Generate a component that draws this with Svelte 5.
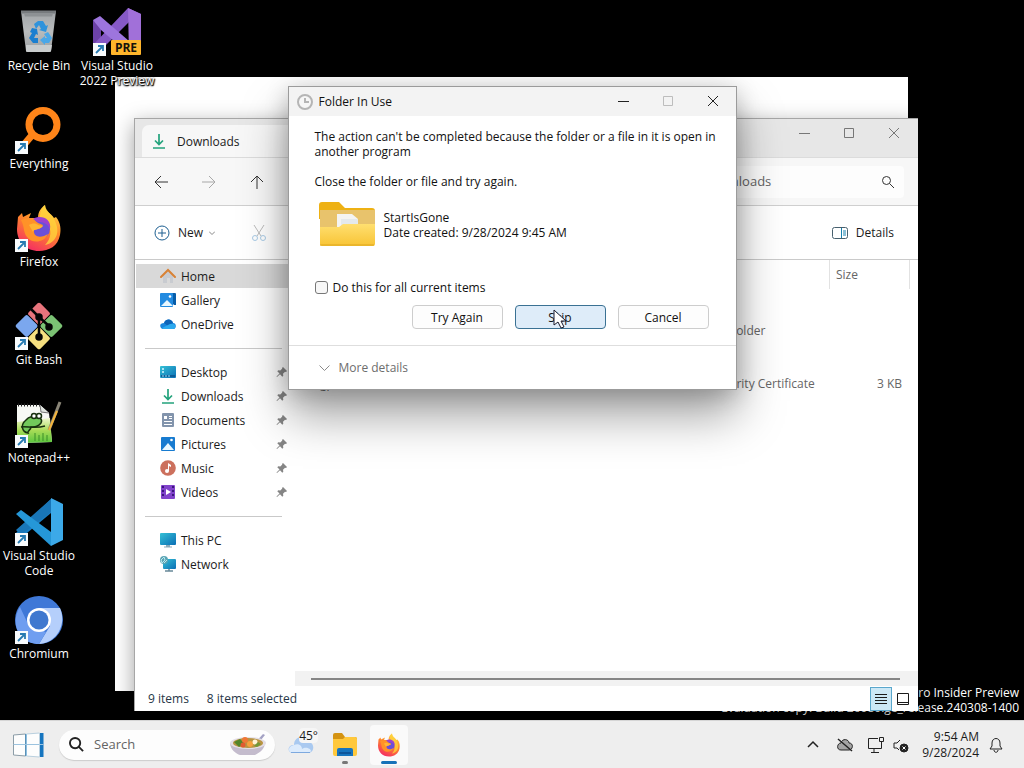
<script lang="ts">
	type Entry = { name: string; icon: string };

	const shortcuts: Entry[] = [
		{ name: 'Recycle Bin', icon: 'bin' },
		{ name: 'Everything', icon: 'everything' },
		{ name: 'Firefox', icon: 'firefox' },
		{ name: 'Git Bash', icon: 'git' },
		{ name: 'Notepad++', icon: 'notepad' },
		{ name: 'Visual Studio Code', icon: 'vscode' },
		{ name: 'Chromium', icon: 'chromium' },
		{ name: 'Visual Studio 2022 Preview', icon: 'vs' }
	];

	const home: Entry[] = [
		{ name: 'Home', icon: 'home' },
		{ name: 'Gallery', icon: 'gallery' },
		{ name: 'OneDrive', icon: 'onedrive' }
	];

	const pinned: Entry[] = [
		{ name: 'Desktop', icon: 'desktop' },
		{ name: 'Downloads', icon: 'downloads' },
		{ name: 'Documents', icon: 'documents' },
		{ name: 'Pictures', icon: 'pictures' },
		{ name: 'Music', icon: 'music' },
		{ name: 'Videos', icon: 'videos' }
	];

	const devices: Entry[] = [
		{ name: 'This PC', icon: 'pc' },
		{ name: 'Network', icon: 'network' }
	];

	let current = $state('Home');
	let applyAll = $state(false);
	let query = $state('');
	let search = $state('');
</script>

{#snippet appIcon(name: string)}
	<svg class="app-icon" viewBox="0 0 48 48" aria-hidden="true">
		{#if name === 'bin'}
			<path d="M6 3h35l-5 40q0 1-2 1H13q-2 0-2-1z" fill="url(#bin)" />
			<path d="M6 2.500h35v3H6z" fill="#777b7e" />
			<path d="M9 5.500h29l-1 3H10z" fill="#8d9194" />
			<path d="M11 37h26l-1 6q0 1-2 1H13q-2 0-2-1z" fill="#c9cccd" />
			<g fill="#2f93dc">
				<path d="M19 16l4-3h5l3 5 2-1-2 7-7-2 2-1-2-4-3 4z" />
				<path d="M17 20l5 1 1 6-2-1-2 4h4v5h-5l-4-5 3-5-2-1z" fill="#1b7fd0" />
				<path d="M33 24l4 6-3 5h-4v2l-5-5 5-4v2h2l-3-4z" fill="#4aa7e8" />
			</g>
		{:else if name === 'everything'}
			<path d="M18 28L7 41" stroke="#ff8519" stroke-width="7" />
			<circle cx="28" cy="18.500" r="14" fill="none" stroke="#ff8519" stroke-width="7" />
		{:else if name === 'git'}
			<g transform="rotate(45 24 24)">
				<rect x="7" y="7" width="16.500" height="16.500" rx="2" fill="#e8747c" />
				<rect x="24.500" y="7" width="16.500" height="16.500" rx="2" fill="#7bc274" />
				<rect x="7" y="24.500" width="16.500" height="16.500" rx="2" fill="#7ba7ee" />
				<rect x="24.500" y="24.500" width="16.500" height="16.500" rx="2" fill="#f6e080" />
			</g>
			<g stroke="#050505" stroke-width="2.500" fill="#050505">
				<path d="M15 6l9 9v20M24 15l10 9" fill="none" />
				<circle cx="24" cy="15" r="2.500" />
				<circle cx="34" cy="25" r="2.500" />
				<circle cx="24" cy="35" r="2.500" />
			</g>
		{:else if name === 'notepad'}
			<path d="M2 5h23l9 8 3 29-31 1-4-2z" fill="#f7f9f5" />
			<path d="M2 22l33-4 2 24-31 1-4-2z" fill="url(#note)" />
			<path d="M3 5h22" stroke="#222" stroke-width="3" stroke-dasharray="1 2" />
			<path d="M25 5l1 7 8 1" fill="#dfe4df" stroke="#777" />
			<g fill="#72c95b" stroke="#18310f" stroke-width="1.500">
				<path d="M13 33c-6-1-8-8-2-13 3-4 8-4 9-2 4-2 8 1 6 5-4 5-7 4-10 4 0 3-4 4-3 6z" />
				<circle cx="19" cy="16" r="2.500" fill="#fff" />
				<circle cx="24" cy="16" r="2.500" fill="#fff" />
				<path d="M6 27c6-1 14 2 24-1" fill="none" />
			</g>
			<path d="M20 41v-8m4 8v-6m4 6v-8m4 8v-6" stroke="#3b8d29" />
			<path d="M45 2L34 30" stroke="#8a8577" stroke-width="3" />
			<path d="M42 11L34 30" stroke="#f3b43b" stroke-width="2" />
		{:else if name === 'vscode'}
			<path d="M36 1v14L6 40l-5-5z" fill="#1a7fc4" />
			<path d="M36 1L1 32l5 5 30-23z" fill="#1976b8" />
			<path d="M6 12L1 16l35 32V34z" fill="#2597d8" />
			<path d="M36 0l12 6v36l-12 6z" fill="#3ca9e8" />
		{:else if name === 'chromium'}
			<circle cx="24" cy="24" r="24" fill="#3f78d7" />
			<path d="M24 12h21c7 16-3 35-21 36l11-18z" fill="#b5cffb" />
			<path d="M5 11l9 19 17 6-7 12C5 48-6 28 5 11z" fill="#6f9ef0" />
			<circle cx="24" cy="24" r="12" fill="#fff" />
			<circle cx="24" cy="24" r="9.500" fill="#3f78cf" />
		{:else if name === 'vs'}
			<path d="M0 12l8 4v18l-8 5z" fill="#6d42a8" />
			<path d="M0 37L35 0l13 6v35l-12 5V14L8 42z" fill="#8659c6" />
			<path d="M35 0l13 6v35l-12 5z" fill="#a170d9" />
			<path d="M0 12l7-4 29 25v13L8 22z" fill="#9d75dd" />
			<rect x="18" y="32" width="30" height="15" rx="1" fill="#ffb52b" />
			<text x="33" y="44" text-anchor="middle" class="pre">PRE</text>
		{:else}
			<path
				d="M3 13l4-4 1 4 8-4-2 5h9c0-7 4-11 7-13 0 7 6 8 9 13l2-1c5 6 5 13 4 18C43 42 34 47 24 47 11 47 2 38 2 25z"
				fill="url(#fox)"
			/>
			<path d="M25 14c0-7 2-10 5-13 1 7 7 9 10 16 7 15-3 23-10 24 6-6 8-16 1-22z" fill="#ffd33c" opacity=".8" />
			<circle cx="25" cy="25" r="10" fill="#6a50d7" />
			<path d="M18 15c8-5 19 0 17 10-3-7-9-7-12-7z" fill="#9c41cf" />
			<path d="M6 16c7-3 13-1 17 3l5 2c-1 4-6 4-9 5-1 8 8 8 14 4-4 9-16 10-21 3-4-5-2-9-6-17z" fill="#ff9228" />
			<path d="M14 21c3-2 7-2 9 0l5 1c-3 4-10 3-10 6z" fill="#ffb534" />
		{/if}
		{#if name !== 'bin' && name !== 'task'}
			<rect x="0" y="35" width="13" height="13" fill="#f8fbfd" />
			<path d="M3 45l6-6M5 38h5v5" fill="none" stroke="#287bb2" stroke-width="1.800" />
		{/if}
	</svg>
{/snippet}

{#snippet navIcon(name: string)}
	<svg class="nav-icon" viewBox="0 0 16 16" aria-hidden="true">
		{#if name === 'home'}
			<path d="M3 7l5-4 5 4v8h-3v-5H7v5H3z" fill="#c8cbd0" />
			<path d="M1 9l7-7 7 7" fill="none" stroke="#d88235" stroke-width="2" stroke-linecap="round" />
		{:else if name === 'gallery'}
			<path d="M3 1h12q1 0 1 1v11h-2z" fill="#075da9" />
			<rect y="1" width="13" height="14" rx="1" fill="#238be0" />
			<path d="M1 14l6-6 6 6z" fill="#e9f8ff" />
			<circle cx="10" cy="4.500" r="1.300" fill="#fff" />
		{:else if name === 'onedrive'}
			<path d="M1 12c-2-3 0-5 3-5 2-5 8-4 9 0 3 0 4 4 1 6H3q-1 0-2-1z" fill="#1785dc" />
			<path d="M4 7c2-5 8-4 9 0l-5 3z" fill="#0b63b8" />
			<path d="M2 12l8-4q3-1 5 1c1 2 0 4-2 4H3z" fill="#2ba9ee" />
		{:else if name === 'desktop'}
			<rect y="2" width="16" height="12" rx="1" fill="url(#screen)" />
			<path d="M2 5h2m-2 3h2" stroke="#d8f6ff" stroke-width="1.500" />
			<path d="M1 12h14" stroke="#0c5c96" stroke-width="2" />
			<path d="M2 12h2m1 0h2m1 0h2" stroke="#9fe3f5" />
		{:else if name === 'downloads'}
			<path d="M8 1v10M4 7.500L8 11.500l4-4M2 15h12" fill="none" stroke="#23a37c" stroke-width="1.700" />
		{:else if name === 'documents'}
			<rect x="2" y="1" width="12" height="14" rx="1" fill="#8294ac" />
			<path d="M4 4h3v3H4zM9 4h3v1H9zm0 2h3v1H9zM4 9h8v1H4zm0 3h8v1H4z" fill="#fff" />
		{:else if name === 'pictures'}
			<rect x="1" y="1" width="14" height="14" rx="1" fill="#177bd0" />
			<path d="M2 14l6-7 6 7z" fill="#e9f8ff" />
			<circle cx="11.500" cy="4" r="1.300" fill="#fff" />
		{:else if name === 'music'}
			<circle cx="8" cy="8" r="7.800" fill="#cc705d" />
			<path d="M8 11V3l3 2v2L9 6v5" fill="#fff" />
			<circle cx="7" cy="11" r="2" fill="#fff" />
		{:else if name === 'videos'}
			<rect x="1" y="1" width="14" height="14" rx="1" fill="#8143cb" />
			<path d="M3 2v12M13 2v12" stroke="#3b177d" stroke-width="2" stroke-dasharray="2 2" />
			<path d="M6 5l5 3-5 3z" fill="#fff" />
		{:else if name === 'pc'}
			<rect y="1" width="16" height="12" rx="1" fill="url(#screen)" />
			<path d="M6 13h4v2H6z" fill="#8ba9b9" />
			<path d="M4 15h8" stroke="#8ba9b9" />
		{:else}
			<rect x="3" y="3" width="13" height="10" rx="1" fill="url(#screen)" />
			<path d="M9 13v2M5 15h8" stroke="#688999" stroke-width="1.500" />
			<circle cx="4" cy="4" r="4" fill="#5ba4b5" />
			<path d="M1 4l3-3 1 3-3 3zm3 3l3-3" stroke="#b9e8ed" fill="none" />
		{/if}
	</svg>
{/snippet}

{#snippet navItem(item: Entry, pin: boolean)}
	<a
		class="nav-item"
		class:active={current === item.name}
		href="#{item.icon}"
		onclick={() => (current = item.name)}
	>
		{@render navIcon(item.icon)}
		<span>{item.name}</span>
		{#if pin}
			<svg class="pin" viewBox="0 0 12 12" aria-hidden="true">
				<path d="M7 1l4 4-1 1-1-.300-2 2 .300 2-1 1-2.300-2.400L1 11l-.500-.500L3.500 7.500 1.300 5.200l1-1 2 .300 2-2L6 2z" />
			</svg>
		{/if}
	</a>
{/snippet}

<svg class="defs" aria-hidden="true">
	<defs>
		<linearGradient id="bin" x2="0" y2="1">
			<stop stop-color="#a0a4a7" />
			<stop offset=".500" stop-color="#b9bcbd" />
			<stop offset="1" stop-color="#9da0a2" />
		</linearGradient>
		<linearGradient id="note" x2="0" y2="1">
			<stop stop-color="#f0f8cf" />
			<stop offset=".500" stop-color="#a8dc57" />
			<stop offset="1" stop-color="#5ac53f" />
		</linearGradient>
		<linearGradient id="fox" x1=".800" y1="0" x2=".300" y2="1">
			<stop stop-color="#ffe14a" />
			<stop offset=".450" stop-color="#ff8a29" />
			<stop offset="1" stop-color="#f42c63" />
		</linearGradient>
		<linearGradient id="screen" x2="1" y2="1">
			<stop stop-color="#35c1d6" />
			<stop offset="1" stop-color="#0b6fb5" />
		</linearGradient>
		<linearGradient id="folder" x2="0" y2="1">
			<stop stop-color="#ffdf70" />
			<stop offset="1" stop-color="#f8c435" />
		</linearGradient>
	</defs>
</svg>

<div class="screen">
	<main class="desktop">
		<div class="blank-window"></div>

		<div class="shortcuts">
			{#each shortcuts as item}
				<button class="shortcut">
					{@render appIcon(item.icon)}
					<span>{item.name}</span>
				</button>
			{/each}
		</div>

		<div class="watermark">
			<div>Windows 11 Pro Insider Preview</div>
			<div>Evaluation copy. Build 26080.ge_release.240308-1400</div>
		</div>

		<section class="explorer" aria-label="Downloads">
			<header class="tabs">
				<div class="tab">
					{@render navIcon('downloads')}
					<span>Downloads</span>
				</div>
				<div class="controls">
					<button aria-label="Minimize window">
						<svg viewBox="0 0 12 12"><path d="M1 6.500h11" /></svg>
					</button>
					<button aria-label="Maximize window">
						<svg viewBox="0 0 12 12"><path d="M1.500 1.500h9v9h-9z" /></svg>
					</button>
					<button aria-label="Close window">
						<svg viewBox="0 0 12 12"><path d="M1 1l10 10M11 1L1 11" /></svg>
					</button>
				</div>
			</header>

			<div class="toolbar">
				<button aria-label="Back">
					<svg viewBox="0 0 14 14"><path d="M14 7H1M7 1L1 7l6 6" /></svg>
				</button>
				<button aria-label="Forward" disabled>
					<svg viewBox="0 0 14 14"><path d="M0 7h13M7 1l6 6-6 6" /></svg>
				</button>
				<button aria-label="Up">
					<svg viewBox="0 0 14 14"><path d="M7 14V1M1 7l6-6 6 6" /></svg>
				</button>
				<label class="find">
					<input type="text" aria-label="Search Downloads" placeholder="Search Downloads" bind:value={query} />
					<svg viewBox="0 0 12 12" aria-hidden="true"><circle cx="4.500" cy="4.500" r="4" /><path d="M7.500 7.500L12 12" /></svg>
				</label>
			</div>

			<div class="commands">
				<button class="new">
					<svg class="plus" viewBox="0 0 16 16" aria-hidden="true">
						<circle cx="8" cy="8" r="7" /><path d="M4 8h8M8 4v8" />
					</svg>
					<span>New</span>
					<svg class="caret" viewBox="0 0 6 4" aria-hidden="true"><path d="M0 .500l3 3 3-3" /></svg>
				</button>
				<button class="cut" aria-label="Cut" disabled>
					<svg viewBox="0 0 16 16">
						<path d="M3 0l7 11M13 0L6 11" stroke="#bbb" />
						<circle cx="4" cy="13" r="2.500" stroke="#a9cbe6" />
						<circle cx="12" cy="13" r="2.500" stroke="#a9cbe6" />
					</svg>
				</button>
				<button class="details">
					<svg viewBox="0 0 16 12" aria-hidden="true">
						<rect x=".500" y=".500" width="15" height="11" rx="2" fill="#fff" stroke="#47606e" />
						<path d="M9.500 1v10M11 4h3m-3 2h3m-3 2h3" stroke="#1681ae" />
					</svg>
					<span>Details</span>
				</button>
			</div>

			<div class="content">
				<nav>
					{#each home as item}{@render navItem(item, false)}{/each}
					<hr />
					{#each pinned as item}{@render navItem(item, true)}{/each}
					<hr />
					{#each devices as item}{@render navItem(item, false)}{/each}
				</nav>

				<div class="files">
					<table>
						<thead>
							<tr><th aria-label="Name"></th><th class="type">Type</th><th class="size">Size</th></tr>
						</thead>
						<tbody>
							<tr class="group"><td colspan="3"></td></tr>
							<tr><td></td><td>File folder</td><td></td></tr>
							<tr class="group"><td colspan="3"></td></tr>
							<tr><td>gp</td><td>Security Certificate</td><td class="kb">3 KB</td></tr>
						</tbody>
					</table>
					<div class="scrollbar"><div class="thumb"></div></div>
				</div>
			</div>

			<footer class="status">
				<span>9 items</span>
				<span>8 items selected</span>
				<button class="view on" aria-label="Details view">
					<svg viewBox="0 0 12 12"><path d="M0 1.500h12M0 4.500h12M0 7.500h12M0 10.500h12" /></svg>
				</button>
				<button class="view" aria-label="Large icons view">
					<svg viewBox="0 0 12 12"><path d="M.500.500h11v11H.500zM1 9.500h10" /></svg>
				</button>
			</footer>
		</section>

		<div class="dialog" role="dialog" aria-labelledby="dialog-title">
			<header>
				<svg class="clock" viewBox="0 0 16 16" aria-hidden="true">
					<circle cx="8" cy="8" r="7" /><path d="M8 4v4h4" />
				</svg>
				<span id="dialog-title">Folder In Use</span>
				<div class="controls">
					<button aria-label="Minimize">
						<svg viewBox="0 0 12 12"><path d="M1 6.500h11" /></svg>
					</button>
					<button aria-label="Maximize" disabled>
						<svg viewBox="0 0 12 12"><path d="M1.500 1.500h9v9h-9z" /></svg>
					</button>
					<button aria-label="Close">
						<svg viewBox="0 0 12 12"><path d="M1 1l10 10M11 1L1 11" /></svg>
					</button>
				</div>
			</header>

			<div class="message">
				<p>The action can't be completed because the folder or a file in it is open in another program</p>
				<p>Close the folder or file and try again.</p>
				<div class="item">
					<svg viewBox="0 0 56 45" aria-hidden="true">
						<path d="M0 3q0-3 3-3h17l6 6h27q3 0 3 3v8H0z" fill="#eeb114" />
						<path d="M1 8h55v24H1z" fill="#e8c36c" />
						<path d="M18 12h15l6 5v15H18z" fill="#f4f4f2" />
						<path d="M22 17h17v12H22z" fill="#e4e9ec" />
						<path d="M1 25h19l4-3h32v20q0 2-2 2H3q-2 0-2-2z" fill="url(#folder)" />
						<path d="M1 43h54" stroke="#dca721" />
					</svg>
					<div>
						<div>StartIsGone</div>
						<div>Date created: 9/28/2024 9:45 AM</div>
					</div>
				</div>
				<label class="check">
					<input type="checkbox" bind:checked={applyAll} />
					<span>Do this for all current items</span>
				</label>
				<div class="actions">
					<button>Try Again</button>
					<button class="hot">
						Skip
						<svg class="cursor" viewBox="0 0 14 20" aria-hidden="true">
							<path d="M1 1v15l4-3 3 6 3-1-3-6h5z" fill="#fff" stroke="#191b2c" />
						</svg>
					</button>
					<button>Cancel</button>
				</div>
			</div>

			<footer>
				<button class="more">
					<svg viewBox="0 0 11 6" aria-hidden="true"><path d="M.500.500l5 5 5-5" /></svg>
					More details
				</button>
			</footer>
		</div>
	</main>

	<footer class="taskbar">
		<button class="start" aria-label="Start">
			<svg viewBox="0 0 32 26" aria-hidden="true">
				<path d="M27 1h4v24h-4z" fill="#1675bf" />
				<path d="M1 3l12-1v10H1zM14 2l13-1v11H14zM1 13h12v11L1 23zM14 13h13v12l-13-1z" fill="#fdfdfd" />
				<path d="M1 3l12-1v22L1 23z" fill="none" stroke="#8c9da8" />
				<path d="M13.500 2v22" stroke="#2685c8" />
				<path d="M1 12.500h30" stroke="#9cc3df" />
				<path d="M14 2l13-1v24l-13-1" fill="none" stroke="#b9d0df" />
			</svg>
		</button>
		<label class="search">
			<svg class="lens" viewBox="0 0 16 16" aria-hidden="true"><circle cx="6.500" cy="6.500" r="5.500" /><path d="M10.500 10.500L15 15" /></svg>
			<input type="text" aria-label="Search" placeholder="Search" bind:value={search} />
			<svg class="bowl" viewBox="0 0 36 22" aria-hidden="true">
				<path d="M24 10l9-10 2 1-9 11z" fill="#a4a2c4" />
				<path d="M0 9c0 6 6 11 10 12h15c6-3 10-7 10-13z" fill="#c4bccd" />
				<ellipse cx="18" cy="9" rx="18" ry="6" fill="#e4dfe6" />
				<ellipse cx="18" cy="9" rx="15" ry="5" fill="#b99443" />
				<path d="M4 8l6-3 4 4-5 4z" fill="#54852a" />
				<circle cx="15" cy="6" r="3" fill="#ef7735" />
				<circle cx="20" cy="10" r="3" fill="#f6a03d" />
				<circle cx="13" cy="11" r="2.500" fill="#df5b30" />
				<circle cx="25" cy="8" r="2.500" fill="#fff2d6" />
				<path d="M24 12l4-4 3 2-4 3z" fill="#72983a" />
			</svg>
		</label>
		<button class="weather" aria-label="Weather">
			<svg viewBox="0 0 26 18" aria-hidden="true">
				<path d="M5 17C-1 17-1 9 6 9c0-9 11-11 14-3 7 0 7 11 0 11z" fill="#a9c9f0" />
				<path d="M6 9c5-2 8 1 8 4 4-3 9 0 9 2q-1 2-3 2H5c-6-1-5-7 1-8z" fill="#dcebfc" />
				<path d="M3 16.500h19" stroke="#7da9df" />
			</svg>
			<span>45°</span>
		</button>
		<button class="task" aria-label="File Explorer">
			<svg viewBox="0 0 24 24" aria-hidden="true">
				<path d="M0 2q0-2 2-2h7l3 4h10q2 0 2 2v5H0z" fill="#d49312" />
				<path d="M0 6h10l2-2h10q2 0 2 2v15q0 2-2 2H2q-2 0-2-2z" fill="#ffc83c" />
				<path d="M4 23v-6q0-2 2-2h12q2 0 2 2v6z" fill="#1674be" />
				<path d="M6 20h12" stroke="#0d559a" stroke-width="2" />
			</svg>
			<i></i>
		</button>
		<button class="task focused" aria-label="Firefox">
			{@render appIcon('task')}
			<i></i>
		</button>

		<div class="tray">
			<button class="overflow" aria-label="Show hidden icons">
				<svg viewBox="0 0 16 16"><path d="M3 10l5-5 5 5" stroke-width="1.500" /></svg>
			</button>
			<button aria-label="OneDrive status">
				<svg viewBox="0 0 16 16">
					<path d="M4 13c-5 0-4-7 0-7 1-5 8-4 8 0 5 0 4 7 0 7z" fill="#a4a4a4" />
					<path d="M1 2l14 12" stroke-width="1.500" />
				</svg>
			</button>
			<button class="network" aria-label="Network">
				<svg viewBox="0 0 16 16">
					<path d="M10 1.500H.500v10h13V7M6 12v3M3 15.500h8" />
					<path d="M11.500.500h4v4h-4zM13.500 5v3" />
				</svg>
			</button>
			<button aria-label="Volume muted">
				<svg viewBox="0 0 16 16">
					<path d="M7 3L4 6H1v5h3l2 2" />
					<circle cx="11" cy="11" r="4" fill="#222" />
					<path d="M9.500 9.500l3 3m0-3l-3 3" stroke="#fff" />
				</svg>
			</button>
			<div class="time">
				<div>9:54 AM</div>
				<div>9/28/2024</div>
			</div>
			<button aria-label="Notifications">
				<svg viewBox="0 0 16 16"><path d="M2 12l2-3V6c0-6 8-6 8 0v3l2 3zM6 13c0 3 4 3 4 0" /></svg>
			</button>
		</div>
	</footer>
</div>

<style>
	:global(body) {
		margin: 0;
		background: #000;
	}

	.screen {
		display: flex;
		flex-direction: column;
		height: 100vh;
		overflow: hidden;
		font-family: 'Open Sans', 'Noto Sans', sans-serif;
		font-size: 12px;
		line-height: 15px;
		color: #1b1b1b;
	}

	.defs {
		position: absolute;
		width: 0;
		height: 0;
	}

	button {
		display: flex;
		align-items: center;
		justify-content: center;
		padding: 0;
		border: 0;
		background: none;
		font: inherit;
		color: inherit;
	}

	input {
		min-width: 0;
		padding: 0;
		border: 0;
		outline: 0;
		background: none;
		font: inherit;
		color: inherit;
	}

	svg {
		flex: none;
	}

	.desktop {
		position: relative;
		flex: 1;
		min-height: 0;
		overflow: hidden;
		background: #000;
	}

	.blank-window {
		position: absolute;
		inset: 77px 116px 29px 115px;
		background: #fff;
	}

	.shortcuts {
		position: relative;
		display: grid;
		grid-template-rows: repeat(7, 98px);
		grid-auto-columns: 78px;
		grid-auto-flow: column;
		width: max-content;
	}

	.shortcut {
		flex-direction: column;
		justify-content: flex-start;
		gap: 2px;
		padding-top: 8px;
		color: #fff;
		text-shadow: 0 1px 2px #000, 0 0 2px #000, 1px 1px 1px #000;
	}

	.shortcut span {
		width: 78px;
	}

	.app-icon {
		width: 48px;
		height: 48px;
	}

	.pre {
		font: 700 12px 'Open Sans', sans-serif;
		fill: #15120b;
		text-shadow: none;
	}

	.watermark {
		position: absolute;
		right: 5px;
		bottom: 5px;
		color: #fff;
		text-align: right;
	}

	.explorer {
		position: absolute;
		inset: 118px 106px 9px 134px;
		display: flex;
		flex-direction: column;
		box-sizing: border-box;
		border: 1px solid #a6a6a6;
		border-width: 1px 0 0 1px;
		background: #fff;
		box-shadow: 0 6px 20px rgb(0 0 0 / 38%);
	}

	.tabs {
		display: flex;
		align-items: flex-end;
		justify-content: space-between;
		height: 38px;
		background: #e7e7e7;
	}

	.tab {
		display: flex;
		align-items: center;
		gap: 10px;
		width: 222px;
		height: 32px;
		margin-left: 7px;
		padding-left: 9px;
		border-radius: 7px 7px 0 0;
		background: #f7f7f7;
	}

	.nav-icon {
		width: 16px;
		height: 16px;
	}

	.controls {
		display: flex;
		align-self: flex-start;
	}

	.tabs .controls {
		padding-right: 2px;
	}

	.controls button {
		width: 45px;
		height: 28px;
	}

	.controls svg {
		width: 12px;
		height: 12px;
		fill: none;
		stroke: #777;
	}

	.toolbar {
		display: flex;
		align-items: center;
		height: 47px;
		border-top: 1px solid #dcdcdc;
		border-bottom: 1px solid #cfcfcf;
		padding: 0 14px 0 2px;
		background: #f7f7f7;
	}

	.toolbar button {
		width: 48px;
		height: 32px;
	}

	.toolbar svg {
		width: 14px;
		height: 14px;
		fill: none;
		stroke: #333;
	}

	.toolbar button:disabled {
		opacity: 0.4;
	}

	.find {
		display: flex;
		align-items: center;
		width: 255px;
		height: 32px;
		margin-left: auto;
		padding: 0 10px;
		box-sizing: border-box;
		border-radius: 4px;
		background: #fdfdfd;
		font-size: 13px;
	}

	.find input {
		flex: 1;
	}

	.find svg {
		width: 12px;
		height: 12px;
	}

	input::placeholder {
		color: #646464;
		opacity: 1;
	}

	.commands {
		display: flex;
		align-items: center;
		height: 53px;
		padding: 0 24px 0 19px;
		border-bottom: 1px solid #cacaca;
	}

	.new {
		gap: 8px;
	}

	.new svg,
	.cut svg {
		width: 16px;
		height: 16px;
		fill: none;
		stroke: #1d5f91;
	}

	.new .caret {
		width: 6px;
		height: 4px;
		margin-left: -2px;
		stroke: #888;
	}

	.cut {
		margin-left: 36px;
	}

	.details {
		gap: 8px;
		margin-left: auto;
	}

	.details svg {
		width: 16px;
		height: 12px;
	}

	.content {
		display: flex;
		flex: 1;
		min-height: 0;
	}

	nav {
		width: 160px;
		padding-top: 4px;
	}

	.nav-item {
		display: flex;
		align-items: center;
		gap: 5px;
		height: 24px;
		margin-left: 1px;
		padding: 0 7px 0 24px;
		color: inherit;
		text-decoration: none;
	}

	.nav-item.active {
		background: #d9d9d9;
	}

	.pin {
		width: 12px;
		height: 12px;
		margin-left: auto;
		fill: #858585;
	}

	hr {
		height: 1px;
		margin: 12px 13px 11px 10px;
		border: 0;
		background: #c9c9c9;
	}

	.files {
		display: flex;
		flex: 1;
		flex-direction: column;
		justify-content: space-between;
		min-width: 0;
	}

	table {
		width: 100%;
		padding-right: 8px;
		border-spacing: 0;
		table-layout: fixed;
		color: #666;
	}

	th {
		height: 29px;
		padding: 0 6px;
		box-sizing: border-box;
		border-right: 1px solid #e2e2e2;
		font-weight: 400;
		text-align: left;
	}

	.type {
		width: 126px;
	}

	.size {
		width: 80px;
	}

	th:first-child,
	td:first-child {
		padding-left: 25px;
	}

	td {
		height: 24px;
		padding: 0 6px;
	}

	.group td {
		height: 29px;
	}

	td.kb {
		text-align: right;
		padding-right: 8px;
	}

	.scrollbar {
		display: flex;
		align-items: center;
		height: 15px;
		padding: 0 18px 0 16px;
		background: #f2f2f2;
	}

	.thumb {
		flex: 1;
		height: 2px;
		background: #868686;
	}

	.status {
		display: flex;
		align-items: center;
		height: 25px;
		padding: 0 4px 0 13px;
		color: #263647;
	}

	.status span {
		margin-right: 18px;
	}

	.view {
		width: 22px;
		height: 24px;
		box-sizing: border-box;
	}

	.view.on {
		margin-left: auto;
		border: 1px solid #5aa7cc;
		background: #cce8f6;
	}

	.view svg {
		width: 12px;
		height: 12px;
		fill: none;
		stroke: #1b1b1b;
	}

	.dialog {
		position: absolute;
		top: 86px;
		right: 0;
		left: 0;
		width: 447px;
		margin: 0 auto;
		border: 1px solid #9b9b9b;
		background: #fff;
		color: #111;
		box-shadow: 0 26px 44px rgb(0 0 0 / 36%), 0 4px 22px rgb(0 0 0 / 20%);
	}

	.dialog header {
		display: flex;
		align-items: center;
		gap: 6px;
		height: 29px;
		padding-left: 8px;
		background: #f3f3f3;
	}

	.clock {
		width: 16px;
		height: 16px;
		fill: #f6f6f6;
		stroke: #b5b5b5;
		stroke-width: 2;
	}

	.dialog .controls {
		margin-left: auto;
	}

	.dialog .controls svg {
		stroke: #222;
	}

	.dialog .controls button:disabled svg {
		stroke: #bdbdbd;
	}

	.message {
		padding: 13px 8px 16px 26px;
	}

	p {
		margin: 0 0 15px;
	}

	.item {
		display: flex;
		align-items: center;
		gap: 9px;
		margin: -2px 0 33px 4px;
	}

	.item svg {
		width: 56px;
		height: 45px;
	}

	.check {
		display: flex;
		align-items: center;
		gap: 5px;
		height: 15px;
	}

	.check input {
		width: 13px;
		height: 13px;
		margin: 0;
		border: 1px solid #777;
		border-radius: 3px;
		background: #f7f7f7;
		appearance: none;
	}

	.check input:checked {
		background: #287bb2;
	}

	.actions {
		display: flex;
		justify-content: flex-end;
		gap: 12px;
		margin: 10px 19px 0 0;
	}

	.actions button {
		position: relative;
		width: 91px;
		height: 24px;
		border: 1px solid #cdcdcd;
		border-radius: 4px;
		background: #fdfdfd;
	}

	.actions .hot {
		border-color: #3a7193;
		background: #deecf9;
	}

	.cursor {
		position: absolute;
		top: 3px;
		left: 37px;
		width: 14px;
		height: 20px;
	}

	.dialog footer {
		padding-left: 30px;
		border-top: 1px solid #dedede;
	}

	.more {
		gap: 9px;
		height: 43px;
		color: #6d6d6d;
	}

	.more svg {
		width: 11px;
		height: 6px;
		fill: none;
		stroke: #8a8a8a;
	}

	.taskbar {
		display: flex;
		align-items: center;
		height: 48px;
		box-sizing: border-box;
		padding: 0 20px 0 12px;
		border-top: 1px solid #d5d5d5;
		background: #eee;
	}

	.start svg {
		width: 33px;
		height: 26px;
	}

	.search {
		display: flex;
		align-items: center;
		gap: 10px;
		width: 216px;
		height: 30px;
		margin-left: 14px;
		padding: 0 9px 0 10px;
		box-sizing: border-box;
		border-radius: 15px;
		background: #fdfdfd;
		box-shadow: 0 1px 1px #ccc;
		font-size: 13px;
	}

	.search input {
		flex: 1;
	}

	.lens {
		width: 15px;
		height: 15px;
		fill: none;
		stroke: #222;
		stroke-width: 2;
	}

	.bowl {
		width: 36px;
		height: 22px;
	}

	.weather {
		position: relative;
		width: 30px;
		height: 40px;
		margin-left: 13px;
		justify-content: flex-start;
	}

	.weather svg {
		width: 26px;
		height: 18px;
	}

	.weather span {
		position: absolute;
		top: 3px;
		right: 0;
		border-radius: 4px;
		background: #f6f6f6;
	}

	.task {
		position: relative;
		width: 38px;
		height: 40px;
		margin-left: 6px;
		border-radius: 4px;
	}

	.weather + .task {
		margin-left: 8px;
	}

	.task svg {
		width: 24px;
		height: 24px;
	}

	.task i {
		position: absolute;
		bottom: 1px;
		width: 6px;
		height: 3px;
		border-radius: 2px;
		background: #777;
	}

	.focused {
		background: #fafafa;
	}

	.focused i {
		width: 16px;
		background: #1672b8;
	}

	.tray {
		display: flex;
		align-items: center;
		gap: 9px;
		margin-left: auto;
	}

	.tray svg {
		width: 16px;
		height: 16px;
		fill: none;
		stroke: #222;
	}

	.tray .overflow {
		margin-right: 7px;
	}

	.tray .network {
		margin-left: 6px;
	}

	.time {
		margin-left: 4px;
		line-height: 16px;
		text-align: right;
	}
</style>
